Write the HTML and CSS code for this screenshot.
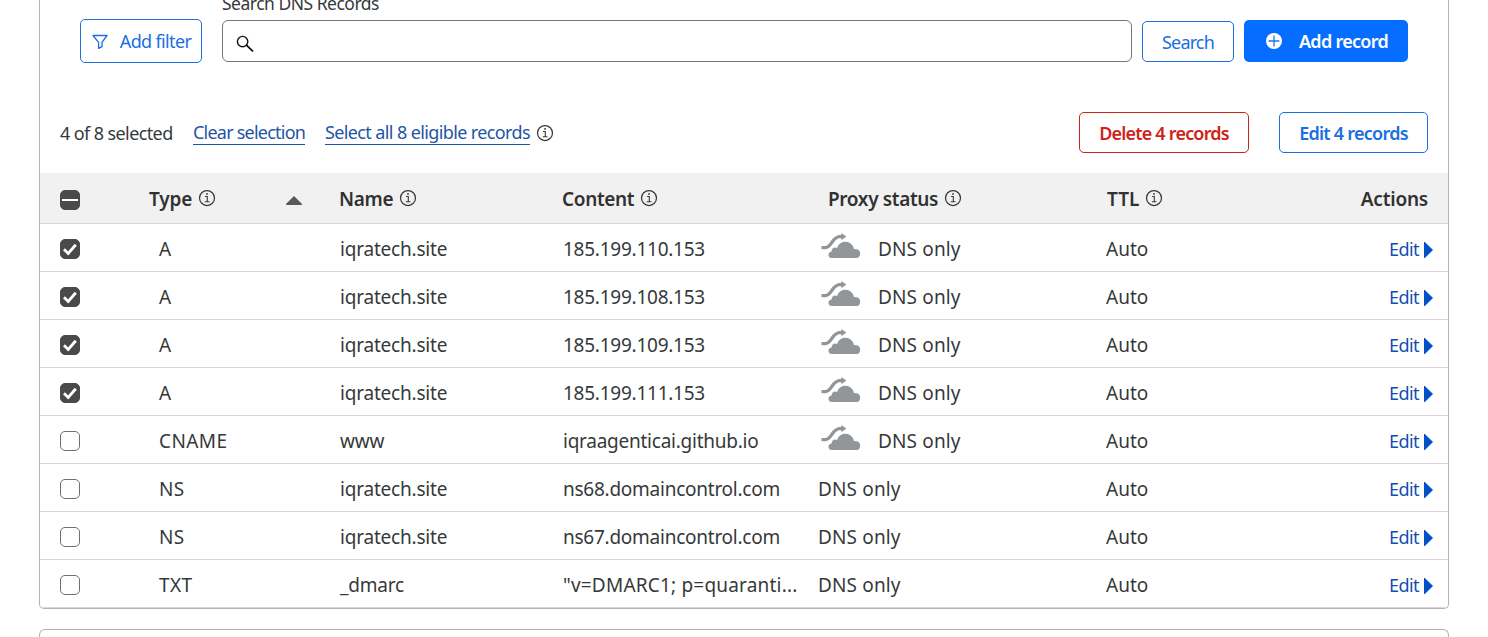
FILE: index.html
```html
<!DOCTYPE html>
<html lang="en">
<head>
<meta charset="utf-8">
<title>DNS Records</title>
<link rel="stylesheet" href="styles.css">
</head>
<body>
<svg class="defs" width="0" height="0" aria-hidden="true">
  <symbol id="info" viewBox="0 0 18 18"><circle cx="9" cy="9" r="7.5" fill="none" stroke="currentColor" stroke-width="1.25"/><path d="M7.1 7.5H9.3V12.7M6.8 12.8H11.5" fill="none" stroke="currentColor" stroke-width="1.1"/><circle cx="9" cy="4.9" r=".95" fill="currentColor"/></symbol>
  <symbol id="cloud" viewBox="0 0 40 26"><path d="M.5 14.6H4.5C10.5 14.6 11.5 3.6 18.5 3.6H22" fill="none" stroke="currentColor" stroke-width="3.3"/><path d="M20.3 0L25.4 3.6L20.3 7.3Z" fill="currentColor"/><path d="M11 25C8.8 25 7.4 23.6 7.5 21.7C7.6 19.9 8.9 18.7 10.7 18.6C10.3 15.6 13.7 13.5 16 15.2C17.4 11 20.4 8.7 24.2 8.7C29 8.7 32.3 11.9 33 16.2C36.5 15.6 39.2 17.4 39.2 20.4C39.2 22.9 37.9 25 35.6 25Z" fill="currentColor"/></symbol>
  <symbol id="tri" viewBox="0 0 9 16"><path d="M0 0H.8L9 8L.8 16H0Z" fill="currentColor"/></symbol>
  <symbol id="check" viewBox="0 0 20 20"><path d="M4 10.3L8.2 14.4L15.8 5.8" fill="none" stroke="#fff" stroke-width="2.8"/></symbol>
</svg>
<main class="card">
  <div class="toolbar">
    <button class="btn filter"><svg width="16" height="16" viewBox="0 0 16 16"><path d="M1 1.5H15L10 8.3V12.6L6.6 14.4V8.3Z" fill="none" stroke="currentColor" stroke-width="1.3" stroke-linejoin="round"/></svg><span>Add filter</span></button>
    <div class="field">
      <label class="label">Search DNS Records</label>
      <div class="input"><svg width="18" height="18" viewBox="0 0 18 18"><circle cx="6.6" cy="6.6" r="5.2" fill="none" stroke="#111" stroke-width="1.4"/><path d="M10.4 10.2L17 16.4" stroke="#111" stroke-width="1.8"/></svg></div>
    </div>
    <button class="btn search">Search</button>
    <button class="btn add"><svg width="16" height="16" viewBox="0 0 16 16"><circle cx="8" cy="8" r="8" fill="#fff"/><path d="M8 2.6V13.4M2.6 8H13.4" stroke="#1974f5" stroke-width="1.3"/></svg><span>Add record</span></button>
  </div>
  <div class="selection">
    <span class="count">4 of 8 selected</span>
    <a class="link clear">Clear selection</a>
    <a class="link all">Select all 8 eligible records</a>
    <svg class="info" width="18" height="18"><use href="#info"/></svg>
    <button class="btn bulk delete">Delete 4 records</button>
    <button class="btn bulk edit-all">Edit 4 records</button>
  </div>
  <div class="table">
    <div class="row head">
      <div class="pick"><span class="box on"><span class="dash"></span></span></div>
      <div class="type"><span>Type</span><svg class="info" width="18" height="18"><use href="#info"/></svg><svg class="sort" width="16" height="9" viewBox="0 0 16 9"><path d="M8 0L16 8V9H0V8Z" fill="#595959"/></svg></div>
      <div class="name"><span>Name</span><svg class="info" width="18" height="18"><use href="#info"/></svg></div>
      <div class="content"><span>Content</span><svg class="info" width="18" height="18"><use href="#info"/></svg></div>
      <div class="proxy"><span>Proxy status</span><svg class="info" width="18" height="18"><use href="#info"/></svg></div>
      <div class="ttl"><span>TTL</span><svg class="info" width="18" height="18"><use href="#info"/></svg></div>
      <div class="actions"><span>Actions</span></div>
    </div>
    <div class="row"><div class="pick"><span class="box on"><svg width="20" height="20"><use href="#check"/></svg></span></div><div class="type">A</div><div class="name">iqratech.site</div><div class="content">185.199.110.153</div><div class="proxy"><svg class="cloud" width="40" height="26"><use href="#cloud"/></svg>DNS only</div><div class="ttl">Auto</div><div class="actions"><span>Edit</span><svg width="9" height="16"><use href="#tri"/></svg></div></div>
    <div class="row"><div class="pick"><span class="box on"><svg width="20" height="20"><use href="#check"/></svg></span></div><div class="type">A</div><div class="name">iqratech.site</div><div class="content">185.199.108.153</div><div class="proxy"><svg class="cloud" width="40" height="26"><use href="#cloud"/></svg>DNS only</div><div class="ttl">Auto</div><div class="actions"><span>Edit</span><svg width="9" height="16"><use href="#tri"/></svg></div></div>
    <div class="row"><div class="pick"><span class="box on"><svg width="20" height="20"><use href="#check"/></svg></span></div><div class="type">A</div><div class="name">iqratech.site</div><div class="content">185.199.109.153</div><div class="proxy"><svg class="cloud" width="40" height="26"><use href="#cloud"/></svg>DNS only</div><div class="ttl">Auto</div><div class="actions"><span>Edit</span><svg width="9" height="16"><use href="#tri"/></svg></div></div>
    <div class="row"><div class="pick"><span class="box on"><svg width="20" height="20"><use href="#check"/></svg></span></div><div class="type">A</div><div class="name">iqratech.site</div><div class="content">185.199.111.153</div><div class="proxy"><svg class="cloud" width="40" height="26"><use href="#cloud"/></svg>DNS only</div><div class="ttl">Auto</div><div class="actions"><span>Edit</span><svg width="9" height="16"><use href="#tri"/></svg></div></div>
    <div class="row"><div class="pick"><span class="box"></span></div><div class="type wide">CNAME</div><div class="name">www</div><div class="content">iqraagenticai.github.io</div><div class="proxy"><svg class="cloud" width="40" height="26"><use href="#cloud"/></svg>DNS only</div><div class="ttl">Auto</div><div class="actions"><span>Edit</span><svg width="9" height="16"><use href="#tri"/></svg></div></div>
    <div class="row"><div class="pick"><span class="box"></span></div><div class="type wide">NS</div><div class="name">iqratech.site</div><div class="content">ns68.domaincontrol.com</div><div class="proxy">DNS only</div><div class="ttl">Auto</div><div class="actions"><span>Edit</span><svg width="9" height="16"><use href="#tri"/></svg></div></div>
    <div class="row"><div class="pick"><span class="box"></span></div><div class="type wide">NS</div><div class="name">iqratech.site</div><div class="content">ns67.domaincontrol.com</div><div class="proxy">DNS only</div><div class="ttl">Auto</div><div class="actions"><span>Edit</span><svg width="9" height="16"><use href="#tri"/></svg></div></div>
    <div class="row"><div class="pick"><span class="box"></span></div><div class="type wide">TXT</div><div class="name">_dmarc</div><div class="content value">"v=DMARC1; p=quaranti...</div><div class="proxy">DNS only</div><div class="ttl">Auto</div><div class="actions"><span>Edit</span><svg width="9" height="16"><use href="#tri"/></svg></div></div>
  </div>
</main>
<section class="card next"></section>
</body>
</html>
```
FILE: styles.css
```css
* { box-sizing: border-box; }
body {
  margin: 0;
  padding: 0 39px;
  background: #fff;
  color: #36393a;
  font: 19px/26px "Noto Sans", "Open Sans", sans-serif;
}
svg { display: block; flex: none; }
.defs { position: absolute; }
.card {
  width: 1410px;
  height: 609px;
  border: 1px solid #b3b3b3;
  border-top: 0;
  border-radius: 0 0 5px 5px;
  overflow: hidden;
}
.next {
  height: 8px;
  margin-top: 20px;
  border-top: 1px solid #b3b3b3;
  border-bottom: 0;
  border-radius: 6px 6px 0 0;
}
.toolbar {
  display: flex;
  align-items: flex-end;
  height: 62px;
  padding: 0 40px;
}
.btn {
  display: flex;
  flex: none;
  align-items: center;
  justify-content: center;
  height: 41px;
  padding: 0;
  border: 1px solid #1b6fe0;
  border-radius: 5px;
  background: #fff;
  color: #1b6fe0;
  font: 18px/24px "Noto Sans", sans-serif;
  white-space: nowrap;
}
.filter { width: 122px; height: 44px; margin: 0 20px -1px 0; padding: 0 0 0 1px; gap: 12px; letter-spacing: -.65px; }
.filter svg { margin-top: 1px; }
.field { width: 910px; margin-right: 10px; }
.label { display: block; height: 26px; margin: 0 0 4px; font-size: 17.5px; letter-spacing: -.5px; white-space: nowrap; }
.input {
  display: flex;
  align-items: center;
  height: 42px;
  padding: 5px 0 0 13px;
  border: 1px solid #777;
  border-radius: 6px;
}
.search { width: 92px; margin-right: 10px; letter-spacing: -.85px; padding: 1px 0 0; }
.add { width: 164px; height: 42px; padding: 0 0 0 2px; border: 0; background: #056dff; color: #fff; font-weight: 600; gap: 17px; letter-spacing: -.7px; }
.selection {
  display: flex;
  align-items: center;
  height: 41px;
  margin: 50px 0 20px;
  padding: 0 20px;
  font-size: 18px;
  white-space: nowrap;
}
.count { width: 113px; margin: 0 20px 0 0; letter-spacing: -.6px; }
.link { height: 25px; margin-right: 20px; border-bottom: 1px solid #1f55a5; color: #1f55a5; line-height: 25px; letter-spacing: -.77px; }
.clear { width: 112px; }
.all { width: 205px; margin-right: 6px; letter-spacing: -.62px; }
.bulk { font-weight: 600; letter-spacing: -.8px; padding-top: 1px; }
.delete { width: 170px; margin-left: auto; margin-right: 30px; border-color: #d02318; color: #d02318; }
.edit-all { width: 149px; letter-spacing: -.75px; }
.row {
  display: grid;
  grid-template-columns: 109px 190px 222px 256px 289px 60px 1fr;
  align-items: center;
  height: 48px;
  padding-top: 2px;
  border-bottom: 1px solid #d9d9d9;
  letter-spacing: -.2px;
  white-space: nowrap;
}
.row > div { display: flex; align-items: center; }
.pick { padding: 1px 0 0 20px; }
.type { padding-left: 10px; }
.wide { letter-spacing: .4px; }
.name { padding-left: 1px; }
.content { padding-left: 2px; letter-spacing: -.25px; }
.value { letter-spacing: .2px; }
.proxy { padding-left: 1px; letter-spacing: .15px; }
.cloud { margin: -6px 17px 0 3px; color: #929699; }
.ttl { letter-spacing: 0; }
.actions { justify-content: flex-end; gap: 5px; padding: 1px 15px 0 0; color: #0f4fb3; font-size: 18px; letter-spacing: -.55px; }
.actions svg { margin-top: 1px; color: #0051c3; }
.head { height: 51px; background: #f1f1f1; font-weight: 600; color: #313131; }
.head .type { padding-left: 0; }
.head .name { padding-left: 0; letter-spacing: -.3px; }
.head .content { padding-left: 1px; letter-spacing: -.35px; }
.head .proxy { padding-left: 11px; letter-spacing: -.35px; }
.head .ttl { padding-left: 1px; }
.head .actions { padding: 0 20px 0 0; color: inherit; font-size: 19px; letter-spacing: -.2px; }
.info { color: #36393a; }
.head .info { margin: -2px 0 0 6px; }
.sort { margin: 2px 37px 0 auto; }
.box {
  display: flex;
  align-items: center;
  justify-content: center;
  flex: none;
  width: 20px;
  height: 20px;
  border: 1px solid #6e6e6e;
  border-radius: 5px;
}
.on { background: #4a4a4a; border-color: #4a4a4a; }
.dash { width: 16px; height: 2px; background: #fff; }
```
